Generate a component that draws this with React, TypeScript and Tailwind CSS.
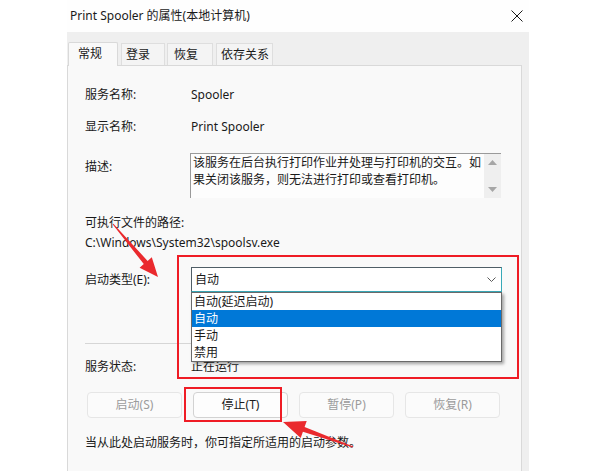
import React from "react";

type P = [number, number];

function arrowPoints(tail: P, tip: P, tailW: number, shaftW: number, headLen: number, headW: number): string {
  const dx = tip[0] - tail[0];
  const dy = tip[1] - tail[1];
  const L = Math.hypot(dx, dy);
  const ux = dx / L;
  const uy = dy / L;
  const nx = -uy;
  const ny = ux;
  const neck: P = [tip[0] - ux * headLen, tip[1] - uy * headLen];
  const pts: P[] = [
    [tail[0] + (nx * tailW) / 2, tail[1] + (ny * tailW) / 2],
    [neck[0] + (nx * shaftW) / 2, neck[1] + (ny * shaftW) / 2],
    [neck[0] + (nx * headW) / 2, neck[1] + (ny * headW) / 2],
    tip,
    [neck[0] - (nx * headW) / 2, neck[1] - (ny * headW) / 2],
    [neck[0] - (nx * shaftW) / 2, neck[1] - (ny * shaftW) / 2],
    [tail[0] - (nx * tailW) / 2, tail[1] - (ny * tailW) / 2],
  ];
  return pts.map((p) => `${p[0].toFixed(1)},${p[1].toFixed(1)}`).join(" ");
}

function Row({ label, children, labelW = "w-[106px]" }: { label: string; children?: React.ReactNode; labelW?: string }) {
  return (
    <div className="flex h-[16px] items-center leading-[16px]">
      <div className={`${labelW} shrink-0`}>{label}</div>
      <div>{children}</div>
    </div>
  );
}

export default function App() {
  const font = {
    fontFamily: '"Noto Sans", "Noto Sans CJK SC", sans-serif',
  };
  return (
    <div
      className="relative h-[471px] w-[601px] overflow-hidden bg-white text-[12px] text-[#1a1a1a]"
      style={font}
    >
      <div className="ml-[67px] flex h-full w-[462px] flex-col">
        {/* Title bar */}
        <div className="flex h-[32px] shrink-0 items-center justify-between bg-[#fefefe] pl-[3px] pr-[6px]">
          <span className="leading-[16px]">Print Spooler 的属性(本地计算机)</span>
          <svg width="12" height="12" viewBox="0 0 12 12" className="mt-[-1px]">
            <path d="M0.5 0.5 L11.5 11.5 M11.5 0.5 L0.5 11.5" stroke="#1a1a1a" strokeWidth="1" fill="none" />
          </svg>
        </div>

        {/* Body */}
        <div className="flex flex-1 flex-col bg-[#efefef]">
          {/* Tabs */}
          <div className="flex h-[33px] shrink-0 items-end pt-[10px]">
            <div className="relative z-10 mb-[-1px] ml-[1px] flex h-[24px] w-[50px] items-center rounded-t-[2px] border border-b-0 border-[#d9d9d9] bg-[#f9f9f9] pb-[2px] pl-[9px] leading-[16px]">
              常规
            </div>
            <div className="ml-[3px] flex h-[22px] w-[44px] items-center border border-b-0 border-[#dedede] bg-[#f4f4f4] pl-[4px] leading-[16px]">
              登录
            </div>
            <div className="ml-[2px] flex h-[22px] w-[46px] items-center border border-b-0 border-[#dedede] bg-[#f4f4f4] pl-[6px] leading-[16px]">
              恢复
            </div>
            <div className="ml-[3px] flex h-[22px] w-[57px] items-center border border-b-0 border-[#dedede] bg-[#f4f4f4] pl-[4px] leading-[16px]">
              依存关系
            </div>
          </div>

          {/* Panel */}
          <div className="relative mr-[7px] flex flex-1 flex-col border border-b-0 border-[#d9d9d9] bg-[#f9f9f9] pl-[17px] pt-[21px]">
            <Row label="服务名称:">Spooler</Row>
            <div className="mt-[16px]">
              <Row label="显示名称:">Print Spooler</Row>
            </div>

            <div className="mt-[18px] flex">
              <div className="w-[105px] shrink-0 pt-[6px] leading-[16px]">描述:</div>
              <div className="flex h-[45px] w-[311px] border-l border-t border-[#9a9a9a] bg-[#fdfdfd]">
                <div className="flex-1 whitespace-nowrap pl-[2px] leading-[17px]">
                  <div>该服务在后台执行打印作业并处理与打印机的交互。如</div>
                  <div>果关闭该服务，则无法进行打印或查看打印机。</div>
                </div>
                <div className="flex w-[17px] flex-col items-center justify-between bg-[#efefef] py-[6px]">
                  <svg width="9" height="5" viewBox="0 0 9 5">
                    <path d="M0 5 L4.5 0 L9 5 Z" fill="#a6a6a6" />
                  </svg>
                  <svg width="9" height="5" viewBox="0 0 9 5">
                    <path d="M0 0 L4.5 5 L9 0 Z" fill="#a6a6a6" />
                  </svg>
                </div>
              </div>
            </div>

            <div className="mt-[17px] h-[16px] leading-[16px]">可执行文件的路径:</div>
            <div className="mt-[4px] h-[16px] leading-[16px]">C:\Windows\System32\spoolsv.exe</div>

            <div className="mt-[16px] flex h-[25px] items-center">
              <div className="w-[106px] shrink-0 leading-[16px]">启动类型(E):</div>
              <div className="relative h-[25px] w-[311px]">
                <div className="flex h-[25px] items-center justify-between border border-[#4f5e66] border-b-[#38a9b8] border-r-[#38a9b8] bg-white pl-[3px] pr-[5px]">
                  <span className="leading-[16px]">自动</span>
                  <svg width="9" height="5" viewBox="0 0 9 5">
                    <path d="M0.5 0.5 L4.5 4.5 L8.5 0.5" stroke="#5a5a5a" strokeWidth="1" fill="none" />
                  </svg>
                </div>
                <div className="absolute left-0 top-full z-20 w-full border border-[#6a6a6a] bg-white shadow-[2px_2px_3px_rgba(0,0,0,0.35)]">
                  <div className="h-[17px] pl-[2px] leading-[17px]">自动(延迟启动)</div>
                  <div className="h-[17px] bg-[#0078d7] pl-[2px] leading-[17px] text-white">自动</div>
                  <div className="h-[17px] pl-[2px] leading-[17px]">手动</div>
                  <div className="h-[17px] pl-[2px] leading-[17px]">禁用</div>
                </div>
              </div>
            </div>

            <div className="mt-[51px] h-px w-[415px] bg-[#d6d6d6]" />

            <div className="mt-[15px]">
              <Row label="服务状态:">正在运行</Row>
            </div>

            <div className="ml-[2px] mt-[17px] flex h-[26px] gap-[11px]">
              <div className="flex w-[95px] items-center justify-center rounded-[4px] border border-[#e6e6e6] bg-[#fbfbfb] text-[#9b9b9b]">
                启动(S)
              </div>
              <div className="flex w-[95px] items-center justify-center rounded-[4px] border border-[#d2d2d2] bg-[#fdfdfd]">
                停止(T)
              </div>
              <div className="flex w-[95px] items-center justify-center rounded-[4px] border border-[#e6e6e6] bg-[#fbfbfb] text-[#9b9b9b]">
                暂停(P)
              </div>
              <div className="flex w-[95px] items-center justify-center rounded-[4px] border border-[#e6e6e6] bg-[#fbfbfb] text-[#9b9b9b]">
                恢复(R)
              </div>
            </div>

            <div className="mt-[17px] h-[16px] leading-[16px]">当从此处启动服务时，你可指定所适用的启动参数。</div>
          </div>
        </div>
      </div>

      {/* Annotations */}
      <div className="absolute left-[177px] top-[255px] z-30 h-[124px] w-[342px] border-2 border-[#ef1c25]" />
      <div className="absolute left-[184px] top-[387px] z-30 h-[35px] w-[98px] border-2 border-[#ef1c25]" />
      <svg className="pointer-events-none absolute left-0 top-0 z-40" width="601" height="471" viewBox="0 0 601 471">
        <polygon points={arrowPoints([113, 224], [158, 277], 1, 5, 19, 16)} fill="#ea2a2e" />
        <polygon points={arrowPoints([353, 447], [283, 422], 1, 5, 22, 18)} fill="#ea2a2e" />
      </svg>
    </div>
  );
}
